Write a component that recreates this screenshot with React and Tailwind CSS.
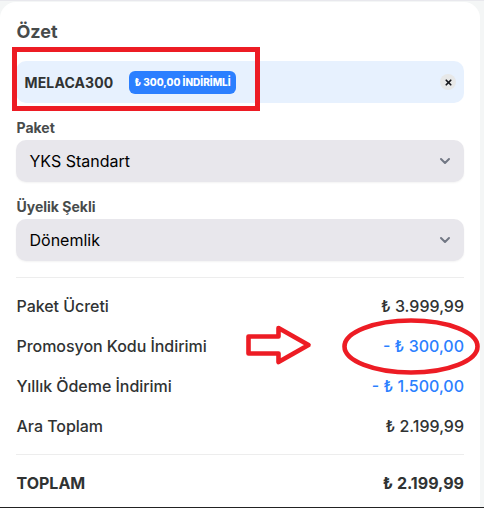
import { ChevronDown, X } from 'lucide-react';

const prices = [
  { label: 'Paket Ücreti', value: '₺ 3.999,99' },
  { label: 'Promosyon Kodu İndirimi', value: '- ₺ 300,00', discount: true },
  { label: 'Yıllık Ödeme İndirimi', value: '- ₺ 1.500,00', discount: true },
  { label: 'Ara Toplam', value: '₺ 2.199,99' },
];

function SelectField({ label, value }) {
  return (
    <div>
      <div className="h-[21px] pl-[0.5px] text-sm leading-[18px] font-bold text-[#474b4b]">{label}</div>
      <button
        type="button"
        className="flex h-[42px] w-full items-center justify-between rounded-[10px] bg-[#e8e7ec] pr-[11px] pl-[13.5px] text-base text-black shadow-xs"
      >
        <span>{value}</span>
        <ChevronDown size={16} strokeWidth={3} className="text-[#717784]" />
      </button>
    </div>
  );
}

// Hand-drawn highlights over the summary
function Annotations() {
  return (
    <svg
      className="pointer-events-none absolute top-0 left-0"
      width="484"
      height="508"
      viewBox="0 0 484 508"
      fill="none"
      stroke="#ed1c24"
    >
      <rect x="14.5" y="49.5" width="243" height="59" strokeWidth="5" />
      <path
        d="M248.5 336.5H278.5V328L308.5 345L278.5 362V353.5H248.5Z"
        strokeWidth="4.6"
        strokeLinejoin="round"
      />
      <ellipse cx="411" cy="346.5" rx="66.5" ry="26" strokeWidth="4.6" />
    </svg>
  );
}

export default function App() {
  return (
    <div className="relative h-[508px] w-[484px] overflow-hidden border-b border-[#222222] bg-[#f4f6f6] font-['Inter',sans-serif]">
      <div className="h-px bg-[#e8e8ed]" />
      <div className="mt-px mr-1 h-[520px] rounded-2xl bg-white px-4 pt-4">
        <h1 className="pl-[0.5px] text-lg leading-7 font-bold text-[#474b4b]">Özet</h1>

        <div className="mt-[15px] flex h-[42px] items-center rounded-[10px] bg-[#e7f1fe] pr-2 pl-[8.5px]">
          <span className="w-[104.5px] pt-0.5 text-sm font-bold tracking-[0.01em] text-[#303333]">MELACA300</span>
          <span className="flex h-[23px] w-[107px] items-center justify-center rounded-md bg-[#2b7fff] text-[10px] font-extrabold whitespace-nowrap text-white">
            ₺ 300,00 İNDİRİMLİ
          </span>
          <button type="button" className="ml-auto flex size-4 items-center justify-center rounded-full bg-[#e7e8e8] text-[#17181d]">
            <X size={9} strokeWidth={4.5} />
          </button>
        </div>

        <div className="mt-4 space-y-4">
          <SelectField label="Paket" value="YKS Standart" />
          <SelectField label="Üyelik Şekli" value="Dönemlik" />
        </div>

        <div className="mt-4 h-[178px] border-y border-[#ededed] pt-[8px]">
          {prices.map((p) => (
            <div key={p.label} className="flex h-10 items-center justify-between pl-[0.5px] text-base font-medium text-[#303333]">
              <span className="tracking-[-0.04px]">{p.label}</span>
              <span className={p.discount ? 'text-[#2b7fff]' : ''}>{p.value}</span>
            </div>
          ))}
        </div>

        <div className="flex h-[56px] items-center justify-between pl-[0.5px] text-base font-bold text-[#303333]">
          <span>TOPLAM</span>
          <span>{'₺ 2.199,99'}</span>
        </div>
      </div>
      <Annotations />
    </div>
  );
}
